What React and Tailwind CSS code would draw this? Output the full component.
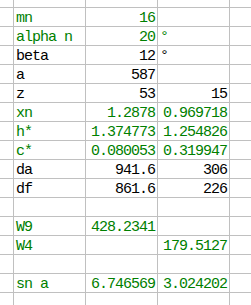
const rows = [
  { label: 'mn', b: '16', c: '', green: true },
  { label: 'alpha n', b: '20', c: '°', green: true, degree: true },
  { label: 'beta', b: '12', c: '°', degree: true },
  { label: 'a', b: '587', c: '' },
  { label: 'z', b: '53', c: '15' },
  { label: 'xn', b: '1.2878', c: '0.969718', green: true },
  { label: 'h*', b: '1.374773', c: '1.254826', green: true },
  { label: 'c*', b: '0.080053', c: '0.319947', green: true },
  { label: 'da', b: '941.6', c: '306' },
  { label: 'df', b: '861.6', c: '226' },
  { label: '', b: '', c: '' },
  { label: 'W9', b: '428.2341', c: '', green: true },
  { label: 'W4', b: '', c: '179.5127', green: true },
  { label: '', b: '', c: '' },
  { label: 'sn a', b: '6.746569', c: '3.024202', green: true },
];

function Blank() {
  return <div className="bg-white" />;
}

function Cell({ children, right, green }) {
  return (
    <div
      className={`bg-white whitespace-nowrap px-[2px] pt-[5px] leading-[12px] ${
        right ? 'text-right' : 'text-left'
      } ${green ? 'text-[#008000]' : 'text-black'}`}
    >
      {children}
    </div>
  );
}

export default function App() {
  return (
    <div
      className="grid w-[251px] h-[305px] grid-cols-[13px_71px_71px_71px_21px] grid-rows-[7px_repeat(15,18px)_12px] gap-px bg-[#c0c0c0] overflow-hidden text-[15px] tracking-[-1px]"
      style={{ fontFamily: '"Liberation Mono", monospace' }}
    >
      {/* partial top row */}
      <Blank />
      <Blank />
      <Blank />
      <Blank />
      <Blank />

      {rows.map((r, i) => (
        <div key={i} className="contents">
          <Blank />
          <Cell green={r.green}>{r.label}</Cell>
          <Cell right green={r.green}>{r.b}</Cell>
          <Cell right={!r.degree} green={r.green}>{r.c}</Cell>
          <Blank />
        </div>
      ))}

      {/* partial bottom row */}
      <Blank />
      <Blank />
      <Blank />
      <Blank />
      <Blank />
    </div>
  );
}
